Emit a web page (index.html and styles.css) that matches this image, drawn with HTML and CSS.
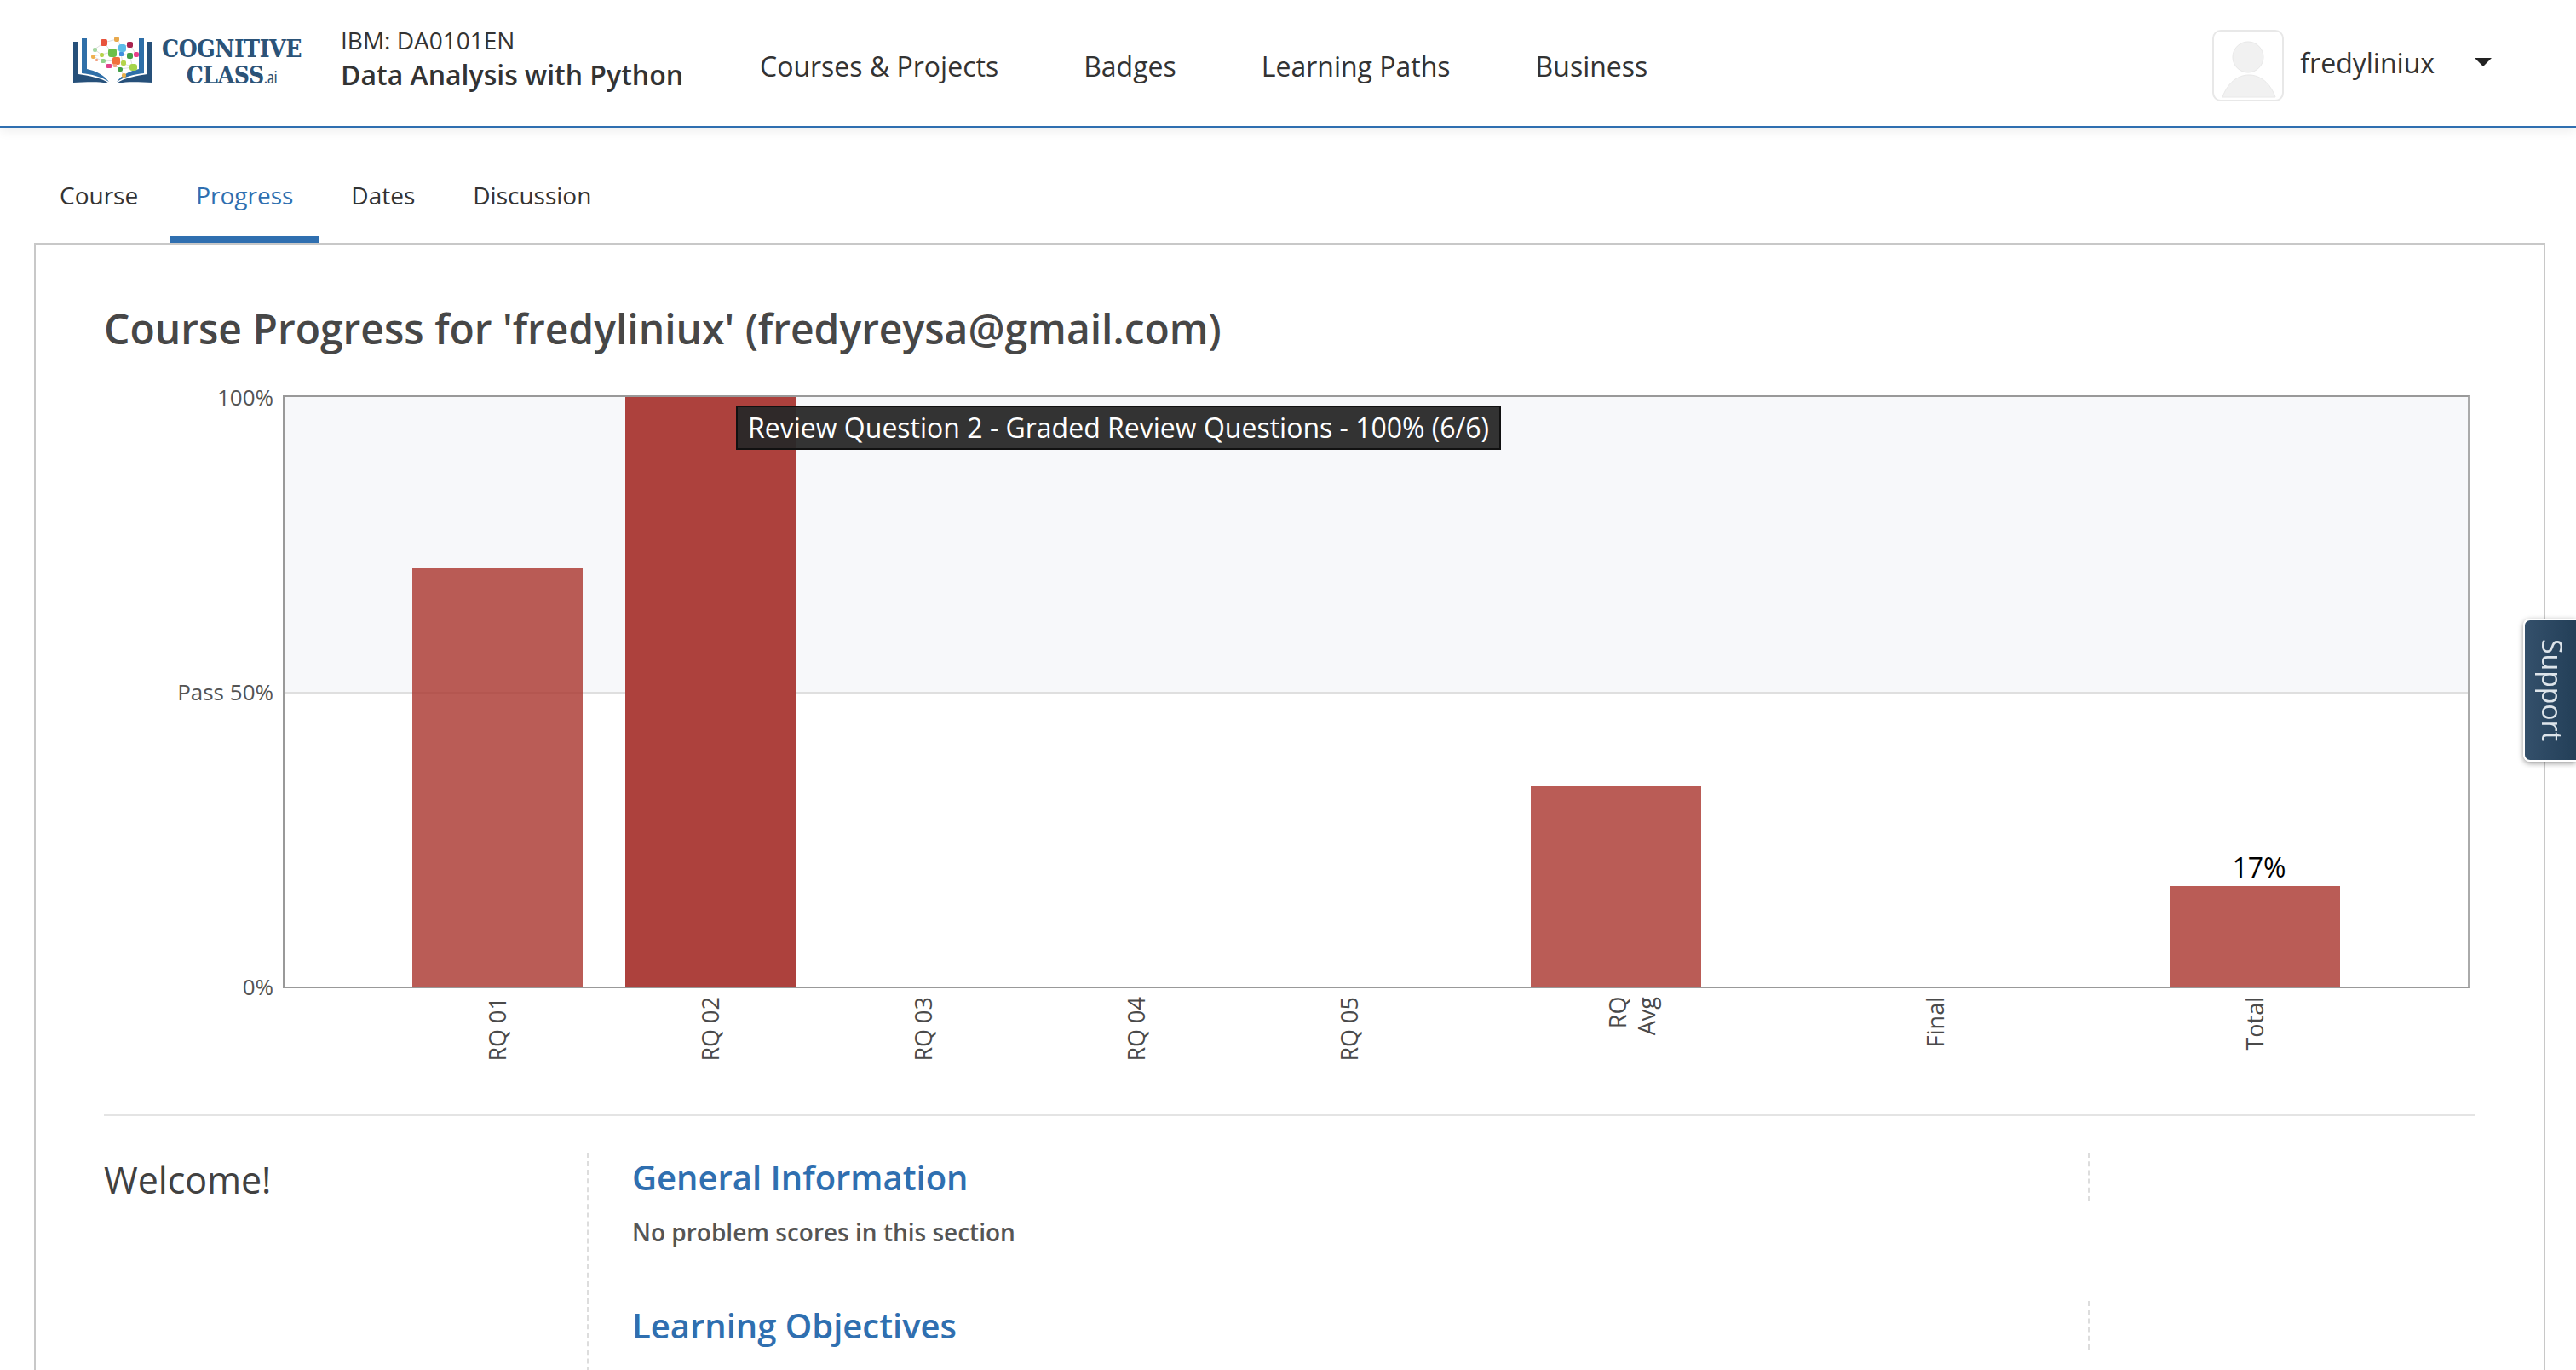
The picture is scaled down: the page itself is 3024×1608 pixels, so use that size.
FILE: index.html
```html
<!DOCTYPE html>
<html lang="en">
<head>
  <meta charset="UTF-8">
  <meta name="viewport" content="width=device-width, initial-scale=1.0">
  <title>Course Progress</title>
  <link rel="stylesheet" href="styles.css">
</head>
<body>

  <header class="topbar">
    <div class="logo">
      <svg class="logo-mark" viewBox="0 0 93 60" width="93" height="60">
        <!-- book -->
        <g>
          <path fill="#26507a" d="M0 8h6v38c12 2 27 4 36 11h-3C28 54 12 56 0 56z"/>
          <path fill="#2f6fa8" d="M10 4h6v36c10 2 20 7 26 15-9-6-21-9-32-10z"/>
        </g>
        <g transform="translate(93 0) scale(-1 1)">
          <path fill="#26507a" d="M0 8h6v38c12 2 27 4 36 11h-3C28 54 12 56 0 56z"/>
          <path fill="#2f6fa8" d="M10 4h6v36c10 2 20 7 26 15-9-6-21-9-32-10z"/>
        </g>
        <!-- brain links -->
        <path fill="none" stroke="#d5d5d5" stroke-width="0.8" d="M25 17L36 9L51 5L57 15L66 11L74 23L66 24L70 38L55 40L59 47M25 17L33 23L45 20L36 9M33 23L23 25L35 31L50 30L45 20L57 15L56 22L66 24M50 30L58 33L70 38M35 31L42 37L48 35L55 40M58 33L56 22"/>
        <!-- brain nodes -->
        <rect x="32" y="5" width="8" height="8" rx="2" fill="#e8533c"/>
        <rect x="48" y="2" width="6" height="6" rx="2" fill="#e8a84c"/>
        <rect x="53" y="11" width="9" height="9" rx="3" fill="#5bbbe8"/>
        <rect x="63" y="8" width="7" height="7" rx="2" fill="#a8234f"/>
        <rect x="41" y="16" width="10" height="10" rx="3" fill="#6cc04a"/>
        <rect x="23" y="15" width="5" height="5" rx="2" fill="#a5d6a0"/>
        <rect x="31" y="21" width="5" height="5" rx="2" fill="#b5d44a"/>
        <rect x="54" y="20" width="5" height="5" rx="1" fill="#3f8fe0"/>
        <rect x="63" y="21" width="7" height="7" rx="2" fill="#43a047"/>
        <rect x="71" y="20" width="6" height="6" rx="2" fill="#e83f8a"/>
        <rect x="21" y="23" width="5" height="5" rx="2" fill="#f0b050"/>
        <rect x="32" y="28" width="6" height="5" rx="2" fill="#8fd08a"/>
        <rect x="46" y="26" width="9" height="9" rx="2" fill="#f0703c"/>
        <rect x="56" y="30" width="6" height="6" rx="2" fill="#b5d44a"/>
        <rect x="26" y="28" width="3" height="3" rx="1" fill="#f2a080"/>
        <rect x="39" y="34" width="6" height="5" rx="1" fill="#e0408a"/>
        <rect x="47" y="34" width="4" height="4" rx="1" fill="#f2a080"/>
        <rect x="66" y="34" width="9" height="8" rx="3" fill="#a5d44a"/>
        <rect x="52" y="38" width="6" height="5" rx="2" fill="#43a047"/>
        <rect x="57" y="45" width="5" height="5" rx="2" fill="#e8b04c"/>
      </svg>
      <div class="logo-word">
        <div>COGNITIVE</div>
        <div>CLASS<span class="logo-ai">.ai</span></div>
      </div>
    </div>

    <div class="course-title">
      <div class="course-code">IBM: DA0101EN</div>
      <div class="course-name">Data Analysis with Python</div>
    </div>

    <nav class="main-nav">
      <a href="#">Courses &amp; Projects</a>
      <a href="#">Badges</a>
      <a href="#">Learning Paths</a>
      <a href="#">Business</a>
    </nav>

    <div class="user-menu">
      <svg class="avatar" viewBox="0 0 84 84" width="84" height="84">
        <rect x="1" y="1" width="82" height="82" rx="9" fill="#fff" stroke="#e8e8e8" stroke-width="2"/>
        <circle cx="42" cy="32" r="18" fill="#f1f1f1" stroke="#e8e8e8"/>
        <path d="M12 79C18 62 30 53 43 53S68 62 74 79z" fill="#f1f1f1" stroke="#e8e8e8"/>
      </svg>
      <span class="user-name">fredyliniux</span>
      <span class="caret"></span>
    </div>
  </header>

  <ul class="tabs">
    <li>Course</li>
    <li class="active">Progress</li>
    <li>Dates</li>
    <li>Discussion</li>
  </ul>

  <main class="card">
    <h1>Course Progress for 'fredyliniux' (fredyreysa@gmail.com)</h1>

    <div class="chart">
      <div class="y-axis">
        <span>100%</span>
        <span>Pass 50%</span>
        <span>0%</span>
      </div>
      <div class="plot">
        <div class="slot"><div class="bar" style="height: 71%"></div></div>
        <div class="slot"><div class="bar hover" style="height: 100%"></div></div>
        <div class="slot"></div>
        <div class="slot"></div>
        <div class="slot"></div>
        <div class="slot avg"><div class="bar" style="height: 34%"></div></div>
        <div class="slot final"></div>
        <div class="slot final"><div class="bar" style="height: 17%"><span class="bar-value">17%</span></div></div>
        <div class="tooltip">Review Question 2 - Graded Review Questions - 100% (6/6)</div>
      </div>
    </div>

    <div class="ticks">
      <div class="slot"><span>RQ 01</span></div>
      <div class="slot"><span>RQ 02</span></div>
      <div class="slot"><span>RQ 03</span></div>
      <div class="slot"><span>RQ 04</span></div>
      <div class="slot"><span>RQ 05</span></div>
      <div class="slot avg tick-two"><span>RQ<br>Avg</span></div>
      <div class="slot final"><span>Final</span></div>
      <div class="slot final"><span>Total</span></div>
    </div>

    <div class="details">
      <aside class="welcome">Welcome!</aside>
      <div class="sections">
        <section>
          <h2><a href="#">General Information</a></h2>
          <p>No problem scores in this section</p>
        </section>
        <section>
          <h2><a href="#">Learning Objectives</a></h2>
          <p></p>
        </section>
      </div>
    </div>
  </main>

  <a class="support" href="#">Support</a>

</body>
</html>
```

FILE: styles.css
```css
html,
body {
  height: 100%;
  margin: 0;
  overflow: hidden;
}

body {
  font-family: "Open Sans", "Noto Sans", sans-serif;
  color: #333;
  background-color: #fff;
}

a {
  color: inherit;
  text-decoration: none;
}

/* top bar */
.topbar {
  display: flex;
  align-items: center;
  box-sizing: border-box;
  height: 150px;
  padding: 5px 99px 0 86px;
  border-bottom: 2px solid #2f6fb0;
  box-shadow: 0 4px 12px rgba(0, 0, 0, 0.07);
}

.logo {
  display: flex;
  flex: none;
  box-sizing: border-box;
  width: 314px;
  margin-bottom: 6px;
}

.logo-mark {
  flex: none;
  margin-right: 11px;
}

.logo-word {
  margin-top: 1px;
  font-family: "DejaVu Serif Condensed", "DejaVu Serif", serif;
  font-stretch: condensed;
  font-weight: 700;
  font-size: 28px;
  letter-spacing: -0.4px;
  line-height: 31px;
  text-align: center;
  white-space: nowrap;
  color: #2b5378;
}

.logo-ai {
  font-family: "Open Sans", sans-serif;
  font-weight: 400;
  font-size: 20px;
}

.course-title {
  width: 492px;
  flex: none;
  margin-bottom: 16px;
}

.course-code {
  font-size: 28px;
  line-height: 38px;
}

.course-name {
  font-size: 32px;
  font-weight: 600;
  line-height: 44px;
}

.main-nav {
  display: flex;
  gap: 100px;
  margin-top: 1px;
  font-size: 32px;
}

.user-menu {
  display: flex;
  align-items: center;
  margin-left: auto;
}

.avatar {
  margin-right: 19px;
}

.user-name {
  font-size: 32px;
  margin-right: 47px;
  position: relative;
  top: -3px;
}

.caret {
  width: 0;
  height: 0;
  border-left: 10px solid transparent;
  border-right: 10px solid transparent;
  border-top: 10px solid #222;
  position: relative;
  top: -4px;
}

/* tabs */
.tabs {
  display: flex;
  gap: 8px;
  list-style-type: none;
  margin: 58px 0 0;
  padding: 0 0 0 40px;
  font-size: 28px;
  line-height: 42px;
}

.tabs li {
  padding: 0 30px 27px;
  border-bottom: 8px solid transparent;
}

.tabs li.active {
  color: #2f6fb0;
  border-bottom-color: #2f6fb0;
}

/* main card */
.card {
  margin: 0 36px 0 40px;
  padding: 66px 80px 400px;
  border: 2px solid #c8c8c8;
}

h1 {
  margin: 0 0 45px;
  font-size: 48px;
  font-weight: 600;
  line-height: 66px;
  color: #474747;
}

/* chart */
.chart {
  display: flex;
  margin-right: 7px;
}

.y-axis {
  display: flex;
  flex-direction: column;
  justify-content: space-between;
  align-items: flex-end;
  box-sizing: border-box;
  width: 199px;
  margin-right: 11px;
  padding: 2px 0;
  font-size: 26px;
  color: #545454;
}

.y-axis span {
  height: 0;
  line-height: 0;
  white-space: nowrap;
}

.plot {
  position: relative;
  display: flex;
  flex: 1;
  gap: 50px;
  height: 692px;
  padding-left: 150px;
  border: 2px solid #999;
  border-right-color: #aaa;
  background: linear-gradient(#f7f8fa 50%, #dfdfdf 50%, #dfdfdf calc(50% + 2px), #fff calc(50% + 2px));
}

.slot {
  display: flex;
  align-items: flex-end;
  flex: none;
  width: 200px;
}

.slot.avg {
  margin-left: 63px;
}

.slot.final {
  margin-left: 125px;
}

.bar {
  position: relative;
  width: 100%;
  background-color: rgba(170, 54, 47, 0.81);
  border-top: 2px solid rgba(185, 90, 84, 0.5);
  box-sizing: border-box;
}

.bar.hover {
  background-color: #ad413d;
  border-top: none;
}

.bar-value {
  position: absolute;
  bottom: 100%;
  left: 10px;
  right: 0;
  margin-bottom: 4px;
  text-align: center;
  font-size: 32px;
  line-height: 40px;
  color: #000;
}

.tooltip {
  position: absolute;
  top: 10px;
  left: 530px;
  padding: 0 12px;
  font-size: 32px;
  line-height: 48px;
  white-space: nowrap;
  color: #fff;
  background-color: rgba(40, 40, 40, 0.95);
  border: 2px solid #111;
}

/* x axis labels */
.ticks {
  display: flex;
  gap: 50px;
  box-sizing: border-box;
  height: 150px;
  padding: 10px 0 0 362px;
  border-bottom: 2px solid #e4e4e4;
}

.ticks .slot {
  align-items: flex-start;
  justify-content: center;
}

.ticks .tick-two {
  padding-left: 38px;
  box-sizing: border-box;
}

.ticks span {
  writing-mode: vertical-rl;
  transform: rotate(180deg);
  text-align: right;
  font-size: 27px;
  line-height: 34px;
  color: #4a4a4a;
  white-space: nowrap;
}

/* welcome and sections */
.details {
  display: flex;
  margin-top: 43px;
}

.welcome {
  box-sizing: border-box;
  width: 569px;
  flex: none;
  padding-top: 6px;
  border-right: 2px dashed #ddd;
  font-size: 43px;
  line-height: 52px;
  color: #414141;
}

.sections {
  flex: 1;
}

h2 {
  box-sizing: border-box;
  width: 1762px;
  height: 57px;
  margin: 0;
  padding-left: 51px;
  border-right: 2px dashed #ddd;
  font-size: 40px;
  font-weight: 600;
  line-height: 57px;
  color: #2f6fb0;
}

section p {
  margin: 16px 0 61px 51px;
  min-height: 40px;
  font-size: 28px;
  font-weight: 600;
  line-height: 40px;
  color: #555;
}

/* support tab on the right edge */
.support {
  position: fixed;
  top: 726px;
  right: 0;
  box-sizing: border-box;
  width: 62px;
  height: 168px;
  padding-top: 22px;
  writing-mode: vertical-rl;
  text-align: left;
  font-size: 32px;
  line-height: 56px;
  color: #dde4ea;
  background: linear-gradient(90deg, #34506b, #233f58);
  border: 2px solid #fff;
  border-right: none;
  border-radius: 8px 0 0 8px;
  box-shadow: 0 2px 6px rgba(0, 0, 0, 0.4);
}
```
